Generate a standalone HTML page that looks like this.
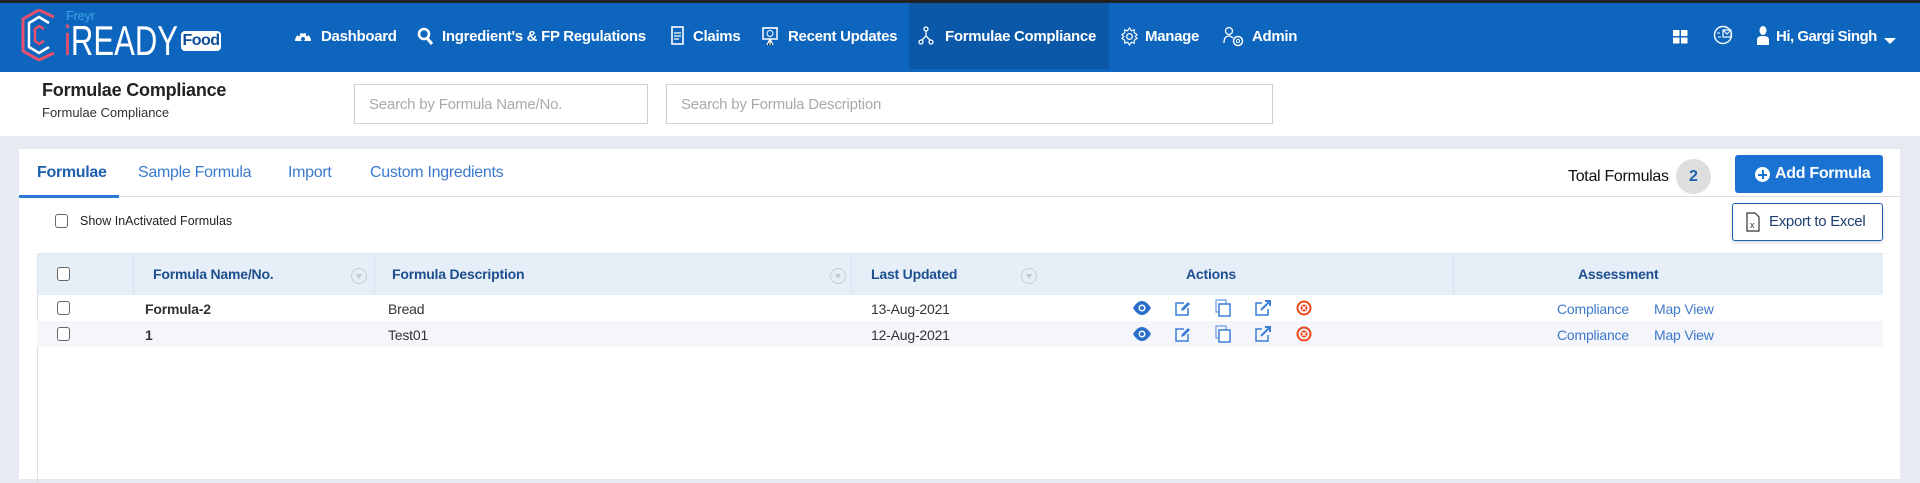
<!DOCTYPE html>
<html><head><meta charset="utf-8"><style>
*{box-sizing:border-box;margin:0;padding:0}
body{width:1920px;height:468px;overflow:hidden;background:#e7eaf1;font-family:"Liberation Sans",Arial,sans-serif;position:relative}
.abs{position:absolute}
.top{left:0;top:0;width:1920px;height:3px;background:#222}
.nav{left:0;top:3px;width:1920px;height:69px;background:#0d65bd}
.nav .it{position:absolute;top:25px;color:#fff;font-weight:bold;font-size:15px;letter-spacing:-0.3px;white-space:nowrap}
.nav svg{position:absolute}
.hdr{left:0;top:72px;width:1920px;height:64px;background:#fff}
.inp{position:absolute;top:84px;height:40px;border:1px solid #cfcfcf;background:#fff;color:#aaa;font-size:15px;padding:11px 14px;letter-spacing:-0.2px}
.card{left:19px;top:149px;width:1881px;height:330px;background:#fff}
.tab{position:absolute;top:164px;font-size:16px;color:#3a7bd0;letter-spacing:-0.3px}
.cb{position:absolute;width:13px;height:14px;border:1px solid #666;border-radius:3px;background:#fff}
.th{position:absolute;font-size:14px;font-weight:bold;color:#1d4f8f;top:266px;letter-spacing:-0.2px}
.td{position:absolute;font-size:14px;color:#333;letter-spacing:-0.2px}
.lnk{position:absolute;font-size:14px;color:#3e78c9;letter-spacing:-0.2px}
.flt{position:absolute;top:268px;width:16px;height:16px;border:1px solid #ccc;border-radius:50%}
.flt:after{content:"";position:absolute;left:4px;top:5px;border-left:3px solid transparent;border-right:3px solid transparent;border-top:5px solid #c8c8c8}
</style></head><body>
<div class="abs top"></div>
<div class="abs nav">
 <svg style="left:20px;top:6px" width="38" height="52" viewBox="0 0 38 52"><path d="M34 8 L19 1 L3 10 L3 42 L19 51 L34 44" fill="none" stroke="#e8506b" stroke-width="3"/><path d="M29 14 L19 8 L9 14 L9 38 L19 44 L29 38" fill="none" stroke="#fff" stroke-width="2.5"/><path d="M24 20 L19 17 L15 20 L15 32 L19 35 L24 32" fill="none" stroke="#e8506b" stroke-width="2.5"/></svg>
 <div class="it" style="left:66px;top:5px;font-size:13px;font-weight:normal;color:#3ba6e6">Freyr</div>
 <div class="it" style="left:64px;top:14px;font-size:42px;font-weight:normal;letter-spacing:0px;transform:scaleX(0.74);transform-origin:left top"><span style="color:#e8506b">i</span>READY</div>
 <div class="abs" style="left:181px;top:28px;width:40px;height:20px;background:#fff;border-radius:4px;color:#0d4e9a;font-size:16px;font-weight:bold;text-align:center;line-height:20px;letter-spacing:-0.5px">Food</div>
 <div class="abs" style="left:909px;top:0;width:200px;height:66px;background:#0b58a8"></div>
 <svg style="left:294px;top:25px" width="18" height="16" viewBox="0 0 18 16"><path d="M1 13 A8 8 0 1 1 17 13 Z" fill="#fff"/><circle cx="9" cy="11" r="2" fill="#0d65bd"/><circle cx="5" cy="7" r="1.2" fill="#0d65bd"/><circle cx="13" cy="7" r="1.2" fill="#0d65bd"/><circle cx="9" cy="4.5" r="1.2" fill="#0d65bd"/></svg>
 <div class="it" style="left:321px">Dashboard</div>
 <svg style="left:417px;top:24px" width="17" height="18" viewBox="0 0 17 18"><circle cx="7" cy="7" r="5" fill="none" stroke="#fff" stroke-width="2.6"/><path d="M10 11 L15 17" stroke="#fff" stroke-width="3"/></svg>
 <div class="it" style="left:442px">Ingredient's &amp; FP Regulations</div>
 <svg style="left:671px;top:23px" width="13" height="19" viewBox="0 0 13 19"><rect x="1" y="1" width="11" height="17" fill="none" stroke="#fff" stroke-width="1.6"/><path d="M3 7h7M3 10h7M3 13h5" stroke="#fff" stroke-width="1.2"/></svg>
 <div class="it" style="left:693px">Claims</div>
 <svg style="left:762px;top:23px" width="16" height="20" viewBox="0 0 16 20"><rect x="1" y="2" width="14" height="11" fill="none" stroke="#fff" stroke-width="1.5"/><circle cx="8" cy="7.5" r="3" fill="none" stroke="#fff"/><path d="M8 13v6M5 19l3-6 3 6M0 2h16" stroke="#fff" stroke-width="1.3"/></svg>
 <div class="it" style="left:788px">Recent Updates</div>
 <svg style="left:918px;top:23px" width="16" height="20" viewBox="0 0 16 20"><circle cx="8" cy="3" r="2" fill="none" stroke="#fff" stroke-width="1.3"/><circle cx="3" cy="16" r="2" fill="none" stroke="#fff" stroke-width="1.3"/><circle cx="13" cy="16" r="2" fill="none" stroke="#fff" stroke-width="1.3"/><path d="M8 5v5L4 14M8 10l4 4" stroke="#fff" stroke-width="1.3" fill="none"/></svg>
 <div class="it" style="left:945px">Formulae Compliance</div>
 <svg style="left:1120px;top:24px" width="19" height="19" viewBox="0 0 20 20"><circle cx="10" cy="10" r="3" fill="none" stroke="#fff" stroke-width="1.3"/><path d="M10 1l2 3 3-1 0 3 3 2-2 2 2 2-3 2 0 3-3-1-2 3-2-3-3 1 0-3-3-2 2-2-2-2 3-2 0-3 3 1z" fill="none" stroke="#fff" stroke-width="1.2"/></svg>
 <div class="it" style="left:1145px">Manage</div>
 <svg style="left:1223px;top:23px" width="22" height="21" viewBox="0 0 22 21"><circle cx="6" cy="5" r="3.5" fill="none" stroke="#fff" stroke-width="1.3"/><path d="M1 17c0-5 2-7 5-7 2 0 3 1 4 2" fill="none" stroke="#fff" stroke-width="1.3"/><circle cx="15" cy="15" r="4.5" fill="none" stroke="#fff" stroke-width="1.5"/><circle cx="15" cy="15" r="1.6" fill="none" stroke="#fff"/></svg>
 <div class="it" style="left:1252px">Admin</div>
 <svg style="left:1673px;top:27px" width="15" height="14" viewBox="0 0 15 14"><rect x="0" y="0" width="6.5" height="6" fill="#fff"/><rect x="8" y="0" width="6.5" height="6" fill="#fff"/><rect x="0" y="7.5" width="6.5" height="6" fill="#fff"/><rect x="8" y="7.5" width="6.5" height="6" fill="#fff"/></svg>
 <svg style="left:1713px;top:22px" width="22" height="20" viewBox="0 0 22 20"><circle cx="10" cy="10" r="8.5" fill="none" stroke="#fff" stroke-width="1.4"/><rect x="10" y="5" width="8" height="7" fill="#0d65bd" stroke="#fff" stroke-width="1.2"/><path d="M10 5l4 4 4-4" fill="none" stroke="#fff"/><path d="M4 8h3M5 12h3" stroke="#fff"/></svg>
 <svg style="left:1757px;top:23px" width="12" height="19" viewBox="0 0 12 19"><ellipse cx="6" cy="4.5" rx="3.5" ry="4.5" fill="#fff"/><path d="M0 19v-5c0-3 2-4 6-4s6 1 6 4v5z" fill="#fff"/></svg>
 <div class="it" style="left:1776px;letter-spacing:-0.5px">Hi, Gargi Singh</div>
 <div class="abs" style="left:1884px;top:35px;border-left:6px solid transparent;border-right:6px solid transparent;border-top:6px solid #fff"></div>
</div>
<div class="abs hdr"></div>
<div class="abs" style="left:42px;top:80px;font-size:18px;font-weight:bold;color:#222;letter-spacing:-0.2px">Formulae Compliance</div>
<div class="abs" style="left:42px;top:105px;font-size:13px;color:#333">Formulae Compliance</div>
<div class="inp" style="left:354px;width:294px">Search by Formula Name/No.</div>
<div class="inp" style="left:666px;width:607px">Search by Formula Description</div>

<div class="abs card"></div>
<div class="abs" style="left:19px;top:196px;width:1881px;height:1px;background:#dcdcdc"></div>
<div class="abs" style="left:19px;top:195px;width:100px;height:3px;background:#2a78d2"></div>
<div class="tab" style="left:37px;color:#1e5fae;font-weight:bold">Formulae</div>
<div class="tab" style="left:138px">Sample Formula</div>
<div class="tab" style="left:288px">Import</div>
<div class="tab" style="left:370px">Custom Ingredients</div>
<div class="abs" style="left:1568px;top:168px;font-size:16px;color:#111;letter-spacing:-0.3px">Total Formulas</div>
<div class="abs" style="left:1676px;top:159px;width:35px;height:35px;border-radius:50%;background:#dedede;color:#1e5fae;font-weight:bold;font-size:16px;text-align:center;line-height:35px">2</div>
<div class="abs" style="left:1735px;top:155px;width:148px;height:38px;background:#1a73d2;border-radius:3px;color:#fff;font-weight:bold;font-size:16px;line-height:38px;padding-left:40px;letter-spacing:-0.3px">Add Formula</div>
<div class="abs" style="left:1755px;top:167px;width:15px;height:15px;border-radius:50%;background:#fff"></div>
<div class="abs" style="left:1758px;top:173.5px;width:9px;height:2px;background:#1a73d2"></div>
<div class="abs" style="left:1761.5px;top:170px;width:2px;height:9px;background:#1a73d2"></div>
<div class="abs" style="left:1732px;top:203px;width:151px;height:38px;border:1px solid #1e5fae;border-radius:3px;color:#1e3f70;font-size:15px;line-height:36px;padding-left:36px;letter-spacing:-0.3px;box-shadow:0 2px 3px rgba(0,0,0,.15)">Export to Excel</div>
<svg class="abs" style="left:1746px;top:212px" width="14" height="20" viewBox="0 0 14 20"><path d="M1 1h8l4 4v14H1z" fill="none" stroke="#333" stroke-width="1.2"/><text x="4" y="16" font-size="9" font-family="Liberation Sans" fill="#333">x</text></svg>

<div class="cb" style="left:55px;top:214px"></div>
<div class="abs" style="left:80px;top:214px;font-size:12.5px;color:#222">Show InActivated Formulas</div>

<div class="abs" style="left:37px;top:253px;width:1846px;height:42px;background:#e6eef8;border-top:1px solid #dde4ee"></div>
<div class="abs" style="left:37px;top:253px;width:1px;height:230px;background:#e0e0e0"></div>
<div class="abs" style="left:133px;top:253px;width:1px;height:42px;background:#d8e2f0"></div>
<div class="abs" style="left:374px;top:253px;width:1px;height:42px;background:#d8e2f0"></div>
<div class="abs" style="left:851px;top:253px;width:1px;height:42px;background:#d8e2f0"></div>
<div class="abs" style="left:1453px;top:253px;width:1px;height:42px;background:#d8e2f0"></div>
<div class="abs" style="left:37px;top:321px;width:1846px;height:26px;background:#f4f6fb"></div>
<div class="cb" style="left:57px;top:267px"></div>
<div class="th" style="left:153px">Formula Name/No.</div>
<div class="flt" style="left:351px"></div>
<div class="th" style="left:392px">Formula Description</div>
<div class="flt" style="left:830px"></div>
<div class="th" style="left:871px">Last Updated</div>
<div class="flt" style="left:1021px"></div>
<div class="th" style="left:1186px">Actions</div>
<div class="th" style="left:1578px">Assessment</div>

<div class="cb" style="left:57px;top:301px"></div>
<div class="td" style="left:145px;top:301px;font-weight:bold">Formula-2</div>
<div class="td" style="left:388px;top:301px">Bread</div>
<div class="td" style="left:871px;top:301px">13-Aug-2021</div>
<div class="lnk" style="left:1557px;top:301px">Compliance</div>
<div class="lnk" style="left:1654px;top:301px">Map View</div>
<div class="cb" style="left:57px;top:327px"></div>
<div class="td" style="left:145px;top:327px;font-weight:bold">1</div>
<div class="td" style="left:388px;top:327px">Test01</div>
<div class="td" style="left:871px;top:327px">12-Aug-2021</div>
<div class="lnk" style="left:1557px;top:327px">Compliance</div>
<div class="lnk" style="left:1654px;top:327px">Map View</div>

<svg class="abs" style="left:1130px;top:298px" width="190" height="60" viewBox="0 0 190 60">
<g id="r">
<path d="M3 10c3-5 6-7 9-7s6 2 9 7c-3 5-6 7-9 7s-6-2-9-7z" fill="#2a6fc9"/><circle cx="12" cy="10" r="3.5" fill="#fff"/><circle cx="12" cy="10" r="2" fill="#2a6fc9"/>
<path d="M54 5h-8v12h12v-7" fill="none" stroke="#3a7fd6" stroke-width="1.5"/><path d="M51 13l1-3 6-6 2 2-6 6z" fill="#3a7fd6"/>
<rect x="86" y="2" width="10" height="12" fill="none" stroke="#6f9fe0" stroke-width="1.3"/><rect x="89" y="6" width="11" height="12" fill="#fff" stroke="#3a7fd6" stroke-width="1.5"/>
<path d="M132 5h-6v12h12v-6" fill="none" stroke="#3a7fd6" stroke-width="1.5"/><path d="M131 12l8-8M135 3h5v5" fill="none" stroke="#3a7fd6" stroke-width="2"/>
<circle cx="174" cy="10" r="6.5" fill="none" stroke="#f0451c" stroke-width="2"/><circle cx="174" cy="10" r="3.5" fill="#f0451c"/><path d="M172 8l4 4M176 8l-4 4" stroke="#fff" stroke-width="1.2"/>
</g>
<use href="#r" y="26"/>
</svg>
</body></html>
